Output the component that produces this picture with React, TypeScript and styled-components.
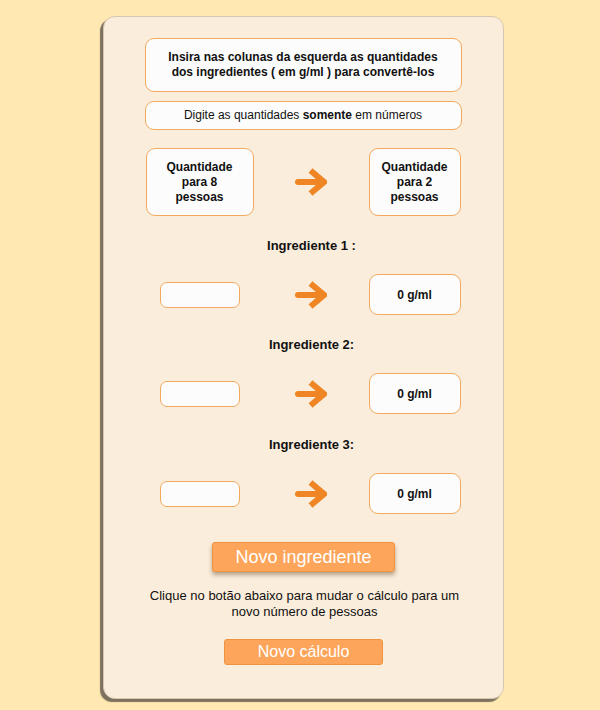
import React from "react";
import styled, { createGlobalStyle } from "styled-components";

const Global = createGlobalStyle`
  html, body { margin: 0; padding: 0; }
  body {
    background: #ffe8b1;
    font-family: "Liberation Sans", Arial, sans-serif;
    color: #111;
    width: 600px;
    height: 710px;
    overflow: hidden;
  }
`;

const Page = styled.div`
  padding: 16px 0 0 103px;
`;

const Card = styled.div`
  box-sizing: border-box;
  width: 401px;
  height: 683px;
  background: #fbeddb;
  border: 1px solid #d8c7b0;
  border-radius: 12px;
  box-shadow: -3px 3px 1px #7c705f;
  padding: 21px 0 0;
  display: flex;
  flex-direction: column;
  align-items: center;
`;

const Content = styled.div`
  width: 317px;
  margin-right: 1px;
  display: flex;
  flex-direction: column;
`;

const InfoBox = styled.div<{ $h: number; $bold?: boolean; $size: number }>`
  box-sizing: border-box;
  height: ${(p) => p.$h}px;
  background: #fcfcfc;
  border: 1px solid #f3aa5e;
  border-radius: 9px;
  display: flex;
  align-items: center;
  justify-content: center;
  text-align: center;
  font-size: ${(p) => p.$size}px;
  line-height: 15px;
  font-weight: ${(p) => (p.$bold ? 700 : 400)};
  & + & { margin-top: 9px; }
`;

const Grid = styled.div<{ $mt: number }>`
  display: grid;
  grid-template-columns: 110px 1fr 93px;
  align-items: center;
  margin-top: ${(p) => p.$mt}px;
`;

const QtyBox = styled.div<{ $offset?: number; $right?: number }>`
  box-sizing: border-box;
  height: 68px;
  margin-left: ${(p) => p.$offset ?? 0}px;
  margin-right: ${(p) => p.$right ?? 0}px;
  background: #fcfcfc;
  border: 1px solid #f3aa5e;
  border-radius: 9px;
  display: flex;
  align-items: center;
  justify-content: center;
  text-align: center;
  font-size: 12px;
  font-weight: 700;
  line-height: 15px;
`;

const ArrowCell = styled.div`
  display: flex;
  justify-content: center;
  padding-right: 2px;
`;

const Label = styled.div`
  grid-column: 2;
  text-align: center;
  white-space: nowrap;
  font-size: 13px;
  font-weight: 700;
  line-height: 15px;
`;

const LabelRow = styled.div<{ $mt: number }>`
  display: grid;
  grid-template-columns: 110px 1fr 93px;
  margin-top: ${(p) => p.$mt}px;
`;

const Input = styled.input`
  box-sizing: border-box;
  justify-self: center;
  width: 80px;
  height: 26px;
  margin-left: 1px;
  background: #fcfcfc;
  border: 1px solid #f3aa5e;
  border-radius: 7px;
  outline: none;
  padding: 0 6px;
  font-family: inherit;
`;

const Output = styled.div`
  box-sizing: border-box;
  height: 41px;
  margin-right: 1px;
  background: #fcfcfc;
  border: 1px solid #f3aa5e;
  border-radius: 9px;
  display: flex;
  align-items: center;
  justify-content: center;
  font-size: 12px;
  font-weight: 700;
`;

const Button = styled.button<{ $w: number; $h: number; $size: number; $mt: number }>`
  box-sizing: border-box;
  width: ${(p) => p.$w}px;
  height: ${(p) => p.$h}px;
  margin-top: ${(p) => p.$mt}px;
  background: #fda65b;
  border: 1px solid #ef9340;
  border-radius: 3px;
  color: #fff;
  font-family: "Liberation Sans", Arial, sans-serif;
  font-size: ${(p) => p.$size}px;
  padding: 0;
  cursor: pointer;
  box-shadow: ${(p) => (p.$size > 17 ? "0 3px 4px rgba(90,70,40,0.45)" : "none")};
`;

const Note = styled.p`
  margin: 16px 0 0;
  width: 322px;
  text-align: center;
  font-size: 13px;
  line-height: 16px;
  padding-left: 2px;
`;

const Arrow = () => (
  <svg width="32" height="28" viewBox="0 0 32 28">
    <g fill="none" stroke="#ef8524" strokeWidth="6" strokeLinejoin="miter">
      <path d="M3 14 H28" strokeLinecap="round" />
      <path d="M15.5 2.5 L29 14 L15.5 25.5" strokeLinecap="butt" />
    </g>
  </svg>
);

const ingredients = [
  { label: "Ingrediente 1 :", labelMt: 22, rowMt: 21 },
  { label: "Ingrediente 2:", labelMt: 22, rowMt: 21 },
  { label: "Ingrediente 3:", labelMt: 23, rowMt: 21 },
];

export default function App() {
  return (
    <>
      <Global />
      <Page>
        <Card>
          <Content>
            <InfoBox $h={54} $bold $size={12}>
              Insira nas colunas da esquerda as quantidades
              <br />
              dos ingredientes ( em g/ml ) para convertê-los
            </InfoBox>
            <InfoBox $h={29} $size={12}>
              <span>
                Digite as quantidades <b>somente</b> em números
              </span>
            </InfoBox>
            <Grid $mt={18}>
              <QtyBox $offset={1} $right={1}>
                Quantidade
                <br />
                para 8
                <br />
                pessoas
              </QtyBox>
              <ArrowCell>
                <Arrow />
              </ArrowCell>
              <QtyBox $right={1}>
                Quantidade
                <br />
                para 2
                <br />
                pessoas
              </QtyBox>
            </Grid>
            {ingredients.map((ing) => (
              <React.Fragment key={ing.label}>
                <LabelRow $mt={ing.labelMt}>
                  <Label>{ing.label}</Label>
                </LabelRow>
                <Grid $mt={ing.rowMt}>
                  <Input type="text" />
                  <ArrowCell>
                    <Arrow />
                  </ArrowCell>
                  <Output>0 g/ml</Output>
                </Grid>
              </React.Fragment>
            ))}
          </Content>
          <Button $w={183} $h={30} $size={18} $mt={28}>
            Novo ingrediente
          </Button>
          <Note>
            Clique no botão abaixo para mudar o cálculo para um novo número de pessoas
          </Note>
          <Button $w={159} $h={26} $size={16} $mt={19}>
            Novo cálculo
          </Button>
        </Card>
      </Page>
    </>
  );
}
